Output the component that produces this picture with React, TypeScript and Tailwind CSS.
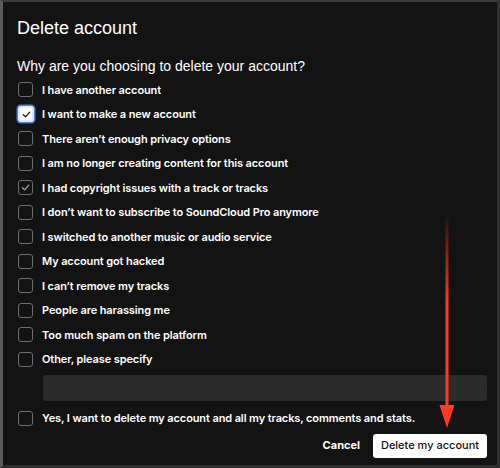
import React, { useState } from 'react'

const reasons = [
    'I have another account',
    'I want to make a new account',
    'There aren\u2019t enough privacy options',
    'I am no longer creating content for this account',
    'I had copyright issues with a track or tracks',
    'I don\u2019t want to subscribe to SoundCloud Pro anymore',
    'I switched to another music or audio service',
    'My account got hacked',
    'I can\u2019t remove my tracks',
    'People are harassing me',
    'Too much spam on the platform',
    'Other, please specify',
]

type BoxState = 'off' | 'focus' | 'on'

function Check({ color }: { color: string }) {
    return (
        <svg width="9" height="9" viewBox="0 0 10 10" fill="none">
            <path d="M1.5 5.2 L4 7.6 L8.6 2.4" stroke={color} strokeWidth="1.4" strokeLinecap="round" strokeLinejoin="round" />
        </svg>
    )
}

function Box({ state }: { state: BoxState }) {
    if (state === 'focus') {
        return (
            <span className="w-[16px] h-[16px] rounded-[3px] bg-white border-2 border-[#dfe8ff] shadow-[0_0_0_1.5px_#4d7fe0] flex items-center justify-center shrink-0">
                <Check color="#111" />
            </span>
        )
    }
    return (
        <span className="w-[15px] h-[15px] rounded-[3px] border border-[#6e6e6e] flex items-center justify-center shrink-0">
            {state === 'on' && <Check color="#a8a8a8" />}
        </span>
    )
}

function Row({ label, state }: { label: string, state: BoxState }) {
    return (
        <div className="h-[24.5px] flex items-center">
            <div className="w-[25px] flex items-center pl-[1px]">
                <Box state={state} />
            </div>
            <span className="text-white text-[11px] font-semibold tracking-[-0.01em]">{label}</span>
        </div>
    )
}

export default function App() {
    const [other, setOther] = useState('')
    const states: BoxState[] = reasons.map((_, i) => i === 1 ? 'focus' : i === 4 ? 'on' : 'off')

    return (
        <div
            className="relative w-[500px] h-[468px] bg-[#131313] border-l-[3px] border-l-[#5c5c5c] border-t-2 border-t-[#3a3a3a] border-r-[3px] border-r-[#2f2f2f] border-b-[3px] border-b-[#2f2f2f] pl-[14px] pr-[10px] pt-[15px] overflow-hidden"
            style={{ fontFamily: 'Inter, "Liberation Sans", sans-serif' }}
        >
            <h1 className="text-[18px] leading-[22px] text-white" style={{ fontFamily: '"Liberation Sans", Arial, sans-serif' }}>
                Delete account
            </h1>
            <p className="mt-[18px] text-[14px] leading-[18px] text-white" style={{ fontFamily: '"Liberation Sans", Arial, sans-serif' }}>
                Why are you choosing to delete your account?
            </p>
            <div className="mt-[2.5px] flex flex-col">
                {reasons.map((r, i) => (
                    <Row key={r} label={r} state={states[i]} />
                ))}
            </div>
            <div className="mt-[3px] pl-[26px]">
                <input
                    value={other}
                    onChange={(e) => setOther(e.target.value)}
                    className="w-full h-[26px] bg-[#2b2b2b] rounded-[3px] outline-none px-2 text-white text-[12px]"
                />
            </div>
            <div className="mt-[5px]">
                <Row label="Yes, I want to delete my account and all my tracks, comments and stats." state="off" />
            </div>
            <div className="mt-[3px] flex justify-end items-center gap-[13px]">
                <button className="text-white text-[11px] font-bold">Cancel</button>
                <button className="h-[24px] w-[114px] bg-white rounded-[3px] text-[#111] text-[11px] font-medium">
                    Delete my account
                </button>
            </div>

            <svg className="absolute left-0 top-0 pointer-events-none" width="500" height="468" viewBox="0 0 500 468">
                <defs>
                    <linearGradient id="arrowFade" x1="0" y1="210" x2="0" y2="300" gradientUnits="userSpaceOnUse">
                        <stop offset="0" stopColor="#ff3b1f" stopOpacity="0" />
                        <stop offset="1" stopColor="#ff3b1f" stopOpacity="1" />
                    </linearGradient>
                </defs>
                <line x1="444" y1="210" x2="444" y2="408" stroke="url(#arrowFade)" strokeWidth="3" />
                <polygon points="436.5,403 451.5,403 444,426" fill="#ff3b1f" />
            </svg>
        </div>
    )
}
